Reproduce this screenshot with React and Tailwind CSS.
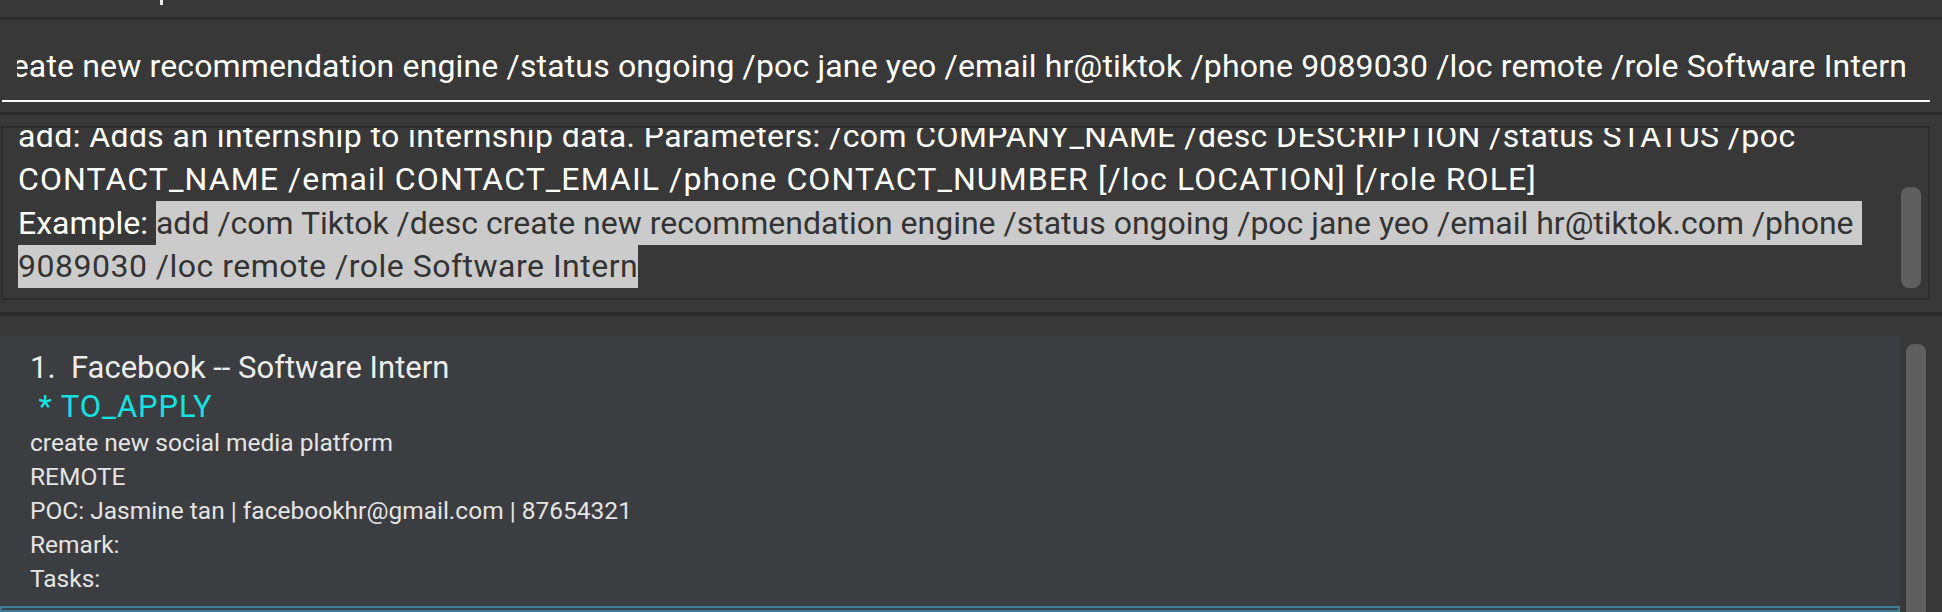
export default function App() {
    const font = "font-['Roboto','Liberation_Sans',sans-serif]";

    return (
        <div className={`w-[1942px] h-[612px] overflow-hidden bg-[#383838] flex flex-col ${font}`}>
            {/* menu bar remnant */}
            <div className="h-[17px] flex items-start">
                <span className="ml-[160px] w-[3px] h-[5px] bg-[#e8e8e8]" />
            </div>
            <div className="h-[3px] bg-[#2b2b2b]" />

            {/* Command box */}
            <div className="h-[92px] flex flex-col">
                <div className="pt-[28px] ml-[17px] w-[1913px] overflow-hidden flex justify-end pr-[23px]">
                    <span className="whitespace-pre text-[32px] leading-[36px] text-white tracking-[0.15px]">
                        add /com Tiktok /desc create new recommendation engine /status ongoing /poc jane yeo /email hr@tiktok /phone 9089030 /loc remote /role Software Intern
                    </span>
                </div>
                <div className="mt-[16px] ml-[2px] w-[1928px] h-[2px] bg-white" />
            </div>
            <div className="h-[3px] bg-[#2b2b2b]" />
            <div className="h-[11px]" />

            {/* Result display */}
            <div className="ml-[1px] w-[1929px] h-[174px] border-2 border-[#2c2c2c] flex overflow-hidden">
                <div className="flex-1 overflow-hidden pl-[15px] -mt-[14px] text-[32px] text-white whitespace-pre">
                    <div className="h-[44px] leading-[44px] tracking-[0.4px]">add: Adds an internship to internship data. Parameters: /com COMPANY_NAME /desc DESCRIPTION /status STATUS /poc</div>
                    <div className="h-[43px] leading-[43px] tracking-[1.1px]">CONTACT_NAME /email CONTACT_EMAIL /phone CONTACT_NUMBER [/loc LOCATION] [/role ROLE]</div>
                    <div className="h-[44px] flex">
                        <span className="leading-[44px]">Example: </span>
                        <span className="leading-[44px] bg-[#cbcbcb] text-[#333333]">add /com Tiktok /desc create new recommendation engine /status ongoing /poc jane yeo /email hr@tiktok.com /phone </span>
                    </div>
                    <div className="h-[43px] flex">
                        <span className="leading-[43px] bg-[#cbcbcb] text-[#333333] tracking-[0.5px]">9089030 /loc remote /role Software Intern</span>
                    </div>
                </div>
                <div className="w-[20px] mr-[7px] ml-[4px] pt-[59px]">
                    <div className="h-[101px] rounded-[8px] bg-[#5f5f5f]" />
                </div>
            </div>

            <div className="h-[12px]" />
            <div className="h-[4px] bg-[#2b2b2b]" />
            <div className="h-[20px]" />

            {/* Internship list */}
            <div className="flex-1 flex min-h-0">
                <div className="w-[1900px] bg-[#3c3d40] overflow-hidden flex flex-col">
                    <div className="h-[270px] shrink-0 pt-[12px] pl-[30px] text-[#ececec] whitespace-pre">
                        <div className="text-[31px] leading-[39px]">1.  Facebook -- Software Intern</div>
                        <div className="text-[31px] leading-[39px] text-[#14e2e2] tracking-[0.9px]"> * TO_APPLY</div>
                        <div className="text-[24.5px] leading-[34px] text-[#e4e4e4]">
                            <div>create new social media platform</div>
                            <div>REMOTE</div>
                            <div>POC: Jasmine tan | facebookhr@gmail.com | 87654321</div>
                            <div>Remark:</div>
                            <div>Tasks:</div>
                        </div>
                    </div>
                    <div className="flex-1 border-2 border-[#3d7e95] bg-[#3b4351]" />
                </div>
                <div className="ml-[6px] mt-[8px] w-[20px] rounded-t-[8px] bg-[#5f5f5f]" />
            </div>
        </div>
    );
}
